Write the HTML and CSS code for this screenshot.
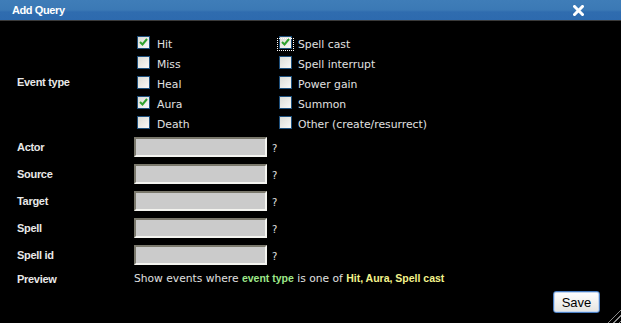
FILE: index.html
```html
<!DOCTYPE html>
<html lang="en">
<head>
    <meta charset="UTF-8">
    <title>Add Query</title>
    <link rel="stylesheet" href="styles.css">
</head>
<body>
    <div class="dialog">
        <div class="titlebar">
            <span class="title">Add Query</span>
            <span class="close">
                <svg width="11" height="11" viewBox="0 0 11 11"><path d="M1.5 1.5 L9.5 9.5 M9.5 1.5 L1.5 9.5" stroke="#fff" stroke-width="3" stroke-linecap="square"/></svg>
            </span>
        </div>

        <div class="content">
            <div class="form">
                <div class="label event-label">Event type</div>
                <div class="types">
                    <label class="opt"><span class="cb checked"><svg width="9" height="8" viewBox="0 0 9 8"><path d="M1 4 L3.5 6.5 L8 1" stroke="#2ea02e" stroke-width="2" fill="none"/></svg></span>Hit</label>
                    <label class="opt col2"><span class="focus"><span class="cb checked"><svg width="9" height="8" viewBox="0 0 9 8"><path d="M1 4 L3.5 6.5 L8 1" stroke="#2ea02e" stroke-width="2" fill="none"/></svg></span></span>Spell cast</label>
                    <label class="opt"><span class="cb"></span>Miss</label>
                    <label class="opt col2"><span class="cb"></span>Spell interrupt</label>
                    <label class="opt"><span class="cb"></span>Heal</label>
                    <label class="opt col2"><span class="cb"></span>Power gain</label>
                    <label class="opt"><span class="cb checked"><svg width="9" height="8" viewBox="0 0 9 8"><path d="M1 4 L3.5 6.5 L8 1" stroke="#2ea02e" stroke-width="2" fill="none"/></svg></span>Aura</label>
                    <label class="opt col2"><span class="cb"></span>Summon</label>
                    <label class="opt"><span class="cb"></span>Death</label>
                    <label class="opt col2"><span class="cb"></span>Other (create/resurrect)</label>
                </div>

                <div class="label">Actor</div>
                <div class="field"><span class="input"></span><span class="help">?</span></div>

                <div class="label">Source</div>
                <div class="field"><span class="input"></span><span class="help">?</span></div>

                <div class="label">Target</div>
                <div class="field"><span class="input"></span><span class="help">?</span></div>

                <div class="label">Spell</div>
                <div class="field"><span class="input"></span><span class="help">?</span></div>

                <div class="label">Spell id</div>
                <div class="field"><span class="input"></span><span class="help">?</span></div>

                <div class="label">Preview</div>
                <div class="preview">Show events where <b class="hl-green">event type</b> is one of <b class="hl-yellow">Hit, Aura, Spell cast</b></div>
            </div>

            <div class="buttons">
                <button class="save-btn">Save</button>
            </div>
        </div>

        <div class="resize"></div>
    </div>
</body>
</html>
```

FILE: styles.css
```css
* {
    margin: 0;
    padding: 0;
    box-sizing: border-box;
}

body {
    background: #000;
    font-family: "DejaVu Sans", Verdana, sans-serif;
    color: #e4e4e4;
}

.dialog {
    position: relative;
    width: 621px;
    height: 323px;
    background: #000;
}

.titlebar {
    height: 21px;
    padding: 0 37px 0 12px;
    display: flex;
    justify-content: space-between;
    align-items: center;
    background: linear-gradient(#3f7db8 0%, #3b79b5 50%, #2f6caf 60%, #2d6aae 100%);
    border-bottom: 1px solid #3a3a3a;
}

.title {
    color: #fff;
    font-family: "Liberation Sans", Arial, sans-serif;
    font-weight: bold;
    font-size: 11px;
    letter-spacing: -0.4px;
}

.close {
    display: flex;
}

.content {
    padding: 12px 0 0 17px;
}

.form {
    display: grid;
    grid-template-columns: 117px 1fr;
    row-gap: 7px;
    align-items: center;
}

.label {
    font-family: "Liberation Sans", Arial, sans-serif;
    font-weight: bold;
    font-size: 11px;
    letter-spacing: -0.3px;
    color: #e8e8e8;
}

.types {
    display: grid;
    grid-template-columns: 142px 1fr;
    grid-auto-rows: 20px;
    padding-left: 3px;
    margin-bottom: -3px;
}

.opt {
    display: flex;
    align-items: center;
    gap: 7px;
    font-size: 10.8px;
    color: #e0e0e0;
    padding-top: 2px;
}

.opt.col2 {
    gap: 6px;
}

.cb {
    width: 13px;
    height: 13px;
    border: 1px solid #1d4f7c;
    background: linear-gradient(135deg, #dcdcd6 0%, #f8f8f6 100%);
    display: flex;
    align-items: center;
    justify-content: center;
    margin-top: -4px;
}

.focus {
    display: flex;
    outline: 1px dotted #fff;
    outline-offset: 1px;
}

.field {
    display: flex;
    align-items: center;
    gap: 5px;
}

.input {
    width: 133px;
    height: 20px;
    background: #cbcbcb;
    border: 2px solid;
    border-color: #7a786c #f4f4f0 #f4f4f0 #7a786c;
}

.help {
    font-size: 10px;
    color: #e0e0e0;
    margin-top: 3px;
}

.preview {
    font-size: 10.7px;
    color: #e0e0e0;
}

.hl-green {
    color: #9ee88a;
    font-family: "Liberation Sans", Arial, sans-serif;
    font-size: 10.5px;
}

.hl-yellow {
    color: #f4f48c;
    font-family: "Liberation Sans", Arial, sans-serif;
    font-size: 10.5px;
}

.buttons {
    display: flex;
    justify-content: flex-end;
    padding: 0 21px 0 0;
    margin-top: 6px;
}

.save-btn {
    width: 47px;
    height: 22px;
    font-family: "Liberation Sans", Arial, sans-serif;
    font-size: 13px;
    color: #000;
    background: linear-gradient(#ffffff, #e4e4e0);
    border: 1px solid #4a7fc4;
    border-radius: 3px;
    box-shadow: inset 0 0 0 1px #c4d6ee;
}

.resize {
    position: absolute;
    right: 0;
    bottom: 0;
    width: 14px;
    height: 14px;
    background: repeating-linear-gradient(135deg, transparent 0 2px, #8a8a8a 2px 3px, transparent 3px 4px);
    clip-path: polygon(100% 0, 100% 100%, 0 100%);
}
```
